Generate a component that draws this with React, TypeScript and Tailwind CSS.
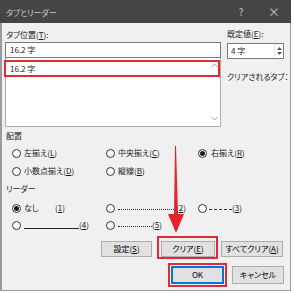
import React from "react";

const Radio = ({ checked }: { checked?: boolean }) => (
  <span className="w-[9px] h-[9px] rounded-full border border-[#333] bg-white flex items-center justify-center shrink-0">
    {checked && <span className="w-[5px] h-[5px] rounded-full bg-[#1a1a1a]" />}
  </span>
);

const Btn = ({ w, h, children, primary }: { w: string; h: string; children: React.ReactNode; primary?: boolean }) => (
  <div
    className={`${w} ${h} flex items-center justify-center bg-[#e1e1e1] border ${
      primary ? "border-[#0078d7] shadow-[inset_0_0_0_1px_#0078d7]" : "border-[#adadad]"
    } text-black`}
  >
    {children}
  </div>
);

export default function App() {
  return (
    <div className="w-[294px] h-[293px] bg-white relative overflow-hidden [font-family:'Noto_Sans_CJK_JP','Noto_Sans',sans-serif] text-[8px] leading-[12px] text-[#1a1a1a] [font-feature-settings:'palt']">
      <div className="w-[291px] flex flex-col">
        {/* title bar */}
        <div className="h-[23px] bg-[#454545] flex items-center pl-[6px] text-[#c8c8c8]">
          <span className="pt-[2px]">タブとリーダー</span>
          <div className="flex-1" />
          <span className="w-[20px] text-center text-[10px]">?</span>
          <span className="w-[20px] ml-[13px] mr-[7px] text-center text-[12px]">×</span>
        </div>
        {/* body */}
        <div className="h-[268px] bg-[#f0f0f0] border-l-2 border-r border-b border-[#9b9b9b] pl-[3px] flex flex-col">
          {/* top area */}
          <div className="flex">
            <div className="w-[216px] flex flex-col">
              <div className="mt-[6px] h-[12px] pl-[1px]">
                タブ位置(<u>T</u>):
              </div>
              <div className="mt-[1px] h-[16px] bg-white border border-[#7a7a7a] flex items-center pl-[4px]">16.2 字</div>
              <div className="h-[69px] bg-white border border-t-0 border-[#adadad] flex">
                <div className="flex-1 flex flex-col">
                  <div className="mt-[2px] h-[17px] flex items-center pl-[4px]">16.2 字</div>
                </div>
                <div className="w-[11px] flex flex-col items-center justify-between py-[5px]">
                  <svg width="7" height="5" viewBox="0 0 7 5">
                    <path d="M0.5 4 L3.5 1 L6.5 4" fill="none" stroke="#a0a0a0" strokeWidth="1" />
                  </svg>
                  <svg width="7" height="5" viewBox="0 0 7 5">
                    <path d="M0.5 1 L3.5 4 L6.5 1" fill="none" stroke="#a0a0a0" strokeWidth="1" />
                  </svg>
                </div>
              </div>
            </div>
            <div className="ml-[6px] w-[57px] flex flex-col">
              <div className="mt-[5px] h-[12px]">
                既定値(<u>E</u>):
              </div>
              <div className="mt-[3px] h-[16px] bg-white border border-[#7a7a7a] flex items-center">
                <span className="flex-1 pl-[3px]">4 字</span>
                <div className="w-[9px] h-full flex flex-col items-center justify-center gap-[2px] border-l border-[#e6e6e6]">
                  <svg width="5" height="3" viewBox="0 0 5 3">
                    <path d="M0 3 L2.5 0 L5 3 Z" fill="#555" />
                  </svg>
                  <svg width="5" height="3" viewBox="0 0 5 3">
                    <path d="M0 0 L2.5 3 L5 0 Z" fill="#555" />
                  </svg>
                </div>
              </div>
              <div className="mt-[12px] h-[12px] whitespace-nowrap">クリアされるタブ：</div>
            </div>
          </div>

          {/* 配置 */}
          <div className="mt-[3px] h-[12px] pl-[1px]">配置</div>
          <div className="mt-[5px] h-[12px] pl-[7px] grid grid-cols-[94px_92px_1fr] items-center">
            <div className="flex items-center gap-[3px]">
              <Radio />
              <span>左揃え(<u>L</u>)</span>
            </div>
            <div className="flex items-center gap-[3px]">
              <Radio />
              <span>中央揃え(<u>C</u>)</span>
            </div>
            <div className="flex items-center gap-[4px]">
              <Radio checked />
              <span>右揃え(<u>R</u>)</span>
            </div>
          </div>
          <div className="mt-[6px] h-[12px] pl-[7px] grid grid-cols-[94px_92px_1fr] items-center">
            <div className="flex items-center gap-[3px]">
              <Radio />
              <span>小数点揃え(<u>D</u>)</span>
            </div>
            <div className="flex items-center gap-[3px]">
              <Radio />
              <span>縦線(<u>B</u>)</span>
            </div>
            <div />
          </div>

          {/* リーダー */}
          <div className="mt-[6px] h-[12px] pl-[1px]">リーダー</div>
          <div className="mt-[7px] h-[12px] pl-[7px] grid grid-cols-[94px_92px_1fr] items-center">
            <div className="flex items-center">
              <Radio checked />
              <span className="ml-[3px] w-[31px]">なし</span>
              <span>
                (<u>1</u>)
              </span>
            </div>
            <div className="flex items-center">
              <Radio />
              <span className="ml-[3px] w-[58px] h-0 border-t border-dotted border-[#333] mt-[3px]" />
              <span>
                (<u>2</u>)
              </span>
            </div>
            <div className="flex items-center">
              <Radio />
              <span className="ml-[2px] w-[23px] h-0 border-t border-dashed border-[#333] mt-[2px]" />
              <span>
                (<u>3</u>)
              </span>
            </div>
          </div>
          <div className="mt-[5px] h-[12px] pl-[7px] grid grid-cols-[94px_92px_1fr] items-center">
            <div className="flex items-center">
              <Radio />
              <span className="ml-[3px] w-[55px] h-0 border-t border-[#222] mt-[6px]" />
              <span>
                (<u>4</u>)
              </span>
            </div>
            <div className="flex items-center">
              <Radio />
              <span className="ml-[3px] w-[34px] h-0 border-t border-dotted border-[#333] mt-[3px]" />
              <span>
                (<u>5</u>)
              </span>
            </div>
            <div />
          </div>

          {/* buttons */}
          <div className="mt-[10px] flex">
            <div className="ml-[96px]">
              <Btn w="w-[51px]" h="h-[16px]">
                設定(<u>S</u>)
              </Btn>
            </div>
            <div className="ml-[9px]">
              <Btn w="w-[54px]" h="h-[16px]">
                クリア(<u>E</u>)
              </Btn>
            </div>
            <div className="ml-[6px]">
              <Btn w="w-[62px]" h="h-[16px]">
                すべてクリア(<u>A</u>)
              </Btn>
            </div>
          </div>
          <div className="mt-[9px] flex">
            <div className="ml-[166px]">
              <Btn w="w-[53px]" h="h-[18px]" primary>
                OK
              </Btn>
            </div>
            <div className="ml-[8px]">
              <Btn w="w-[52px]" h="h-[18px]">
                キャンセル
              </Btn>
            </div>
          </div>
        </div>
      </div>

      {/* red annotations */}
      <div className="absolute left-[4px] top-[60px] w-[216px] h-[17px] border-2 border-[#e02b36]" />
      <div className="absolute left-[157px] top-[236px] w-[61px] h-[23px] border-2 border-[#e02b36]" />
      <div className="absolute left-[168px] top-[263px] w-[59px] h-[24px] border-2 border-[#e02b36]" />
      <svg className="absolute left-0 top-0" width="294" height="293" viewBox="0 0 294 293">
        <polygon points="175,146 176,146 178,214 184,214 176,233 168,214 174,214" fill="#e5232b" />
      </svg>
    </div>
  );
}
